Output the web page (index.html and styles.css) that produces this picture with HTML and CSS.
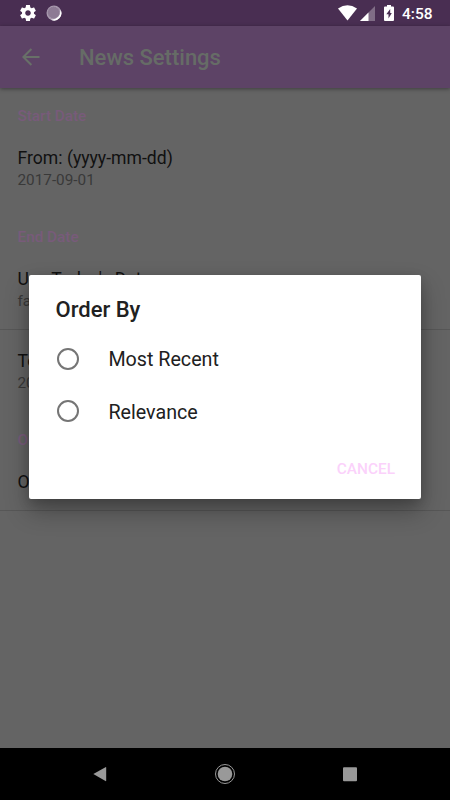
FILE: index.html
```html
<!DOCTYPE html>
<html lang="en">
<head>
<meta charset="utf-8">
<title>News Settings</title>
<link rel="stylesheet" href="styles.css">
</head>
<body>
<div class="screen">
  <header class="status">
    <svg class="gear" viewBox="2 2 20 20"><path d="M19.43 12.98c.04-.32.07-.64.07-.98s-.03-.66-.07-.98l2.11-1.65c.19-.15.24-.42.12-.64l-2-3.46c-.12-.22-.39-.3-.61-.22l-2.49 1c-.52-.4-1.08-.73-1.69-.98l-.38-2.65C14.46 2.18 14.25 2 14 2h-4c-.25 0-.46.18-.49.42l-.38 2.65c-.61.25-1.17.59-1.69.98l-2.49-1c-.23-.09-.49 0-.61.22l-2 3.46c-.13.22-.07.49.12.64l2.11 1.65c-.04.32-.07.65-.07.98s.03.66.07.98l-2.11 1.65c-.19.15-.24.42-.12.64l2 3.46c.12.22.39.3.61.22l2.49-1c.52.4 1.08.73 1.69.98l.38 2.65c.03.24.24.42.49.42h4c.25 0 .46-.18.49-.42l.38-2.65c.61-.25 1.17-.59 1.69-.98l2.49 1c.23.09.49 0 .61-.22l2-3.46c.12-.22.07-.49-.12-.64l-2.11-1.65zM12 15.5c-1.93 0-3.5-1.57-3.5-3.5s1.57-3.5 3.5-3.5 3.5 1.57 3.5 3.5-1.57 3.5-3.5 3.5z"/></svg>
    <svg class="sync" viewBox="0 0 16 16"><circle cx="8" cy="8" r="7.5" fill="#a899ae"/><path d="M14.400 4.500A7.300 7.300 0 0 1 5 14.800Q10 14.300 12.400 11.500Q14.600 8.500 14.400 4.500Z" fill="#fff"/><circle cx="7.600" cy="7.600" r="6" fill="#8d7a94" stroke="#b0a3b5" stroke-width=".5" stroke-dasharray="1 1"/></svg>
    <svg class="wifi" viewBox="0 0 19 16"><path d="M0 3.500Q9.500-3 19 3.500L9.500 15.500Z"/></svg>
    <svg class="signal" viewBox="0 0 15 15"><path d="M15 0V15H0Z" opacity=".3"/><path d="M8.500 6.500V15H0Z"/></svg>
    <svg class="battery" viewBox="0 0 10 16"><path fill-rule="evenodd" d="M3 0H7V1.500H9Q10 1.500 10 2.500V15Q10 16 9 16H1Q0 16 0 15V2.500Q0 1.500 1 1.500H3ZM6.200 4L2.300 9.300H4.500V13.500L7.800 7.900H6.200Z"/></svg>
    <span class="clock">4:58</span>
  </header>
  <div class="appbar">
    <svg class="back" viewBox="0 0 18 18"><path d="M17.500 9H1.500M9.400 1L1.400 9L9.400 17"/></svg>
    <h1>News Settings</h1>
  </div>
  <main class="prefs">
    <h2 class="first">Start Date</h2>
    <div class="row"><div class="name">From: (yyyy-mm-dd)</div><div class="value">2017-09-01</div></div>
    <h2>End Date</h2>
    <div class="row lined"><div class="name">Use Today's Date</div><div class="value">false</div></div>
    <div class="row"><div class="name">To:</div><div class="value">2017-09-30</div></div>
    <h2>Order By</h2>
    <div class="row single lined"><div class="name">Order By</div></div>
  </main>
  <nav class="navbar">
    <svg viewBox="0 0 24 24"><path d="M5.300 12L17.500 5.200Q18.200 4.900 18.200 5.700V18.600Q18.200 19.400 17.500 19Z"/></svg>
    <svg viewBox="0 0 24 24"><circle cx="12" cy="12" r="7.300"/><circle class="ring" cx="12" cy="12" r="9.500"/></svg>
    <svg viewBox="0 0 24 24"><rect x="5" y="5.300" width="14" height="14" rx="1"/></svg>
  </nav>
  <section class="dialog">
    <h3>Order By</h3>
    <div class="option"><span class="radio"></span><span class="label">Most Recent</span></div>
    <div class="option"><span class="radio"></span><span class="label">Relevance</span></div>
    <div class="actions">CANCEL</div>
  </section>
</div>
</body>
</html>
```
FILE: styles.css
```css
* { box-sizing: border-box; }
body { margin: 0; font-family: Roboto, sans-serif; }
svg { display: block; flex: none; fill: #fff; }
h1, h2, h3 { margin: 0; font-weight: 500; }
.screen { position: relative; width: 450px; height: 800px; overflow: hidden; display: flex; flex-direction: column; background: #646464; }
.status { height: 26px; flex: none; display: flex; align-items: center; padding: 0 17.5px 0 20.4px; background: #492e52; }
.gear { width: 16px; height: 16px; }
.sync { width: 16px; height: 16px; margin-left: 10px; }
.wifi { width: 19px; height: 16px; margin-left: auto; }
.signal { width: 15px; height: 15px; margin-left: 3px; margin-top: 1px; }
.battery { width: 10px; height: 16px; margin-left: 9px; }
.clock { margin-left: 8px; color: #fff; font-size: 15.5px; font-weight: 500; line-height: 26px; padding-top: 2px; }
.appbar { height: 62px; flex: none; display: flex; align-items: center; padding-left: 22px; background: #5d4366; box-shadow: 0 1px 4px rgba(0,0,0,.4); z-index: 1; }
.back { width: 18px; height: 18px; fill: none; stroke: #687068; stroke-width: 2; }
h1 { margin-left: 39px; padding-top: 2px; font-size: 22px; line-height: 28px; color: #666c66; }
.prefs { flex: 1; }
h2 { height: 40px; padding: 19px 17.5px 0; font-size: 15.3px; line-height: 20px; color: #785b7a; }
h2.first { height: 39px; padding-top: 18px; }
.row { height: 81.3px; padding: 20px 17.5px 0; }
.row.single { height: 60px; }
.lined { border-bottom: 1px solid #575757; }
.name { font-size: 17.6px; line-height: 22px; color: #111; }
.value { font-size: 15.3px; line-height: 22px; color: #393939; }
.navbar { height: 52.5px; flex: none; display: flex; align-items: center; justify-content: space-around; padding: 0 38px 0 37px; background: #000; }
.navbar svg { width: 24px; height: 24px; fill: #999; }
.navbar .ring { fill: none; stroke: #999; stroke-width: 1; }
.dialog { position: absolute; z-index: 2; left: 29px; top: 274.5px; width: 392px; height: 224.5px; padding: 20px 26px 0; background: #fff; border-radius: 2px; box-shadow: 0 12px 24px rgba(0,0,0,.3), 0 4px 12px rgba(0,0,0,.15); color: #212121; }
h3 { height: 38px; font-size: 22px; line-height: 30px; padding-left: .5px; }
.option { height: 52.5px; display: flex; align-items: center; gap: 29px; padding-left: 2.4px; font-size: 19.7px; }
.label { padding-top: 2px; }
.radio { width: 22px; height: 22px; border: 2px solid #757575; border-radius: 50%; }
.actions { padding-top: 20px; font-size: 15.4px; font-weight: 500; line-height: 22px; text-align: right; color: #fbd2fb; }
```
